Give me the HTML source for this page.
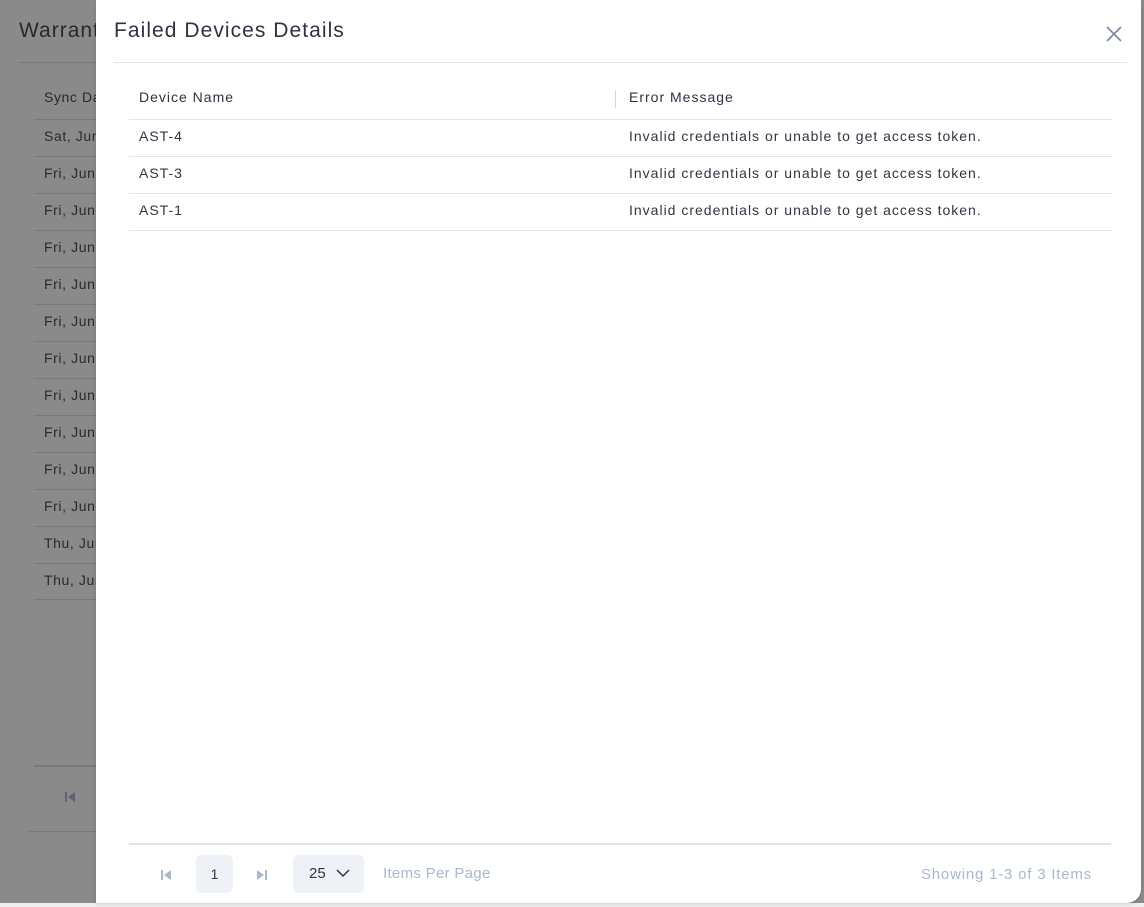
<!DOCTYPE html>
<html><head><style>
*{margin:0;padding:0;box-sizing:border-box}
body{width:1144px;height:907px;position:relative;overflow:hidden;font-family:"Liberation Sans",sans-serif;background:#efefef}
.bg{position:absolute;left:0;top:0;width:1144px;height:903px;background:#8a8a8a}
.t{position:absolute;white-space:nowrap;letter-spacing:0.6px}
.bl{position:absolute;height:1px;background:#7a7a7a}
.modal{position:absolute;left:96px;top:0;width:1045px;height:903px;background:#fff;border-radius:0 0 14px 0;box-shadow:0 1px 3px rgba(0,0,0,.15)}
.ml{position:absolute;height:1px;background:#e2e7ee}
.m{position:absolute;white-space:nowrap;font-size:14px;color:#2f3642;letter-spacing:1px}
</style></head><body>
<div class="bg">
<div class="t" style="left:19px;top:19px;font-size:21px;color:#262a30;letter-spacing:1px">Warranty</div>
<div class="bl" style="left:18px;top:62px;width:90px"></div>
<div class="t" style="left:44px;top:89px;font-size:14px;color:#262a30">Sync Date</div>
<div class="bl" style="left:34px;top:119px;width:70px"></div>
<div class="t" style="left:44px;top:128px;font-size:14px;color:#2a2a2a">Sat, Jun</div><div class="bl" style="left:34px;top:156px;width:70px"></div>
<div class="t" style="left:44px;top:165px;font-size:14px;color:#2a2a2a">Fri, Jun</div><div class="bl" style="left:34px;top:193px;width:70px"></div>
<div class="t" style="left:44px;top:202px;font-size:14px;color:#2a2a2a">Fri, Jun</div><div class="bl" style="left:34px;top:230px;width:70px"></div>
<div class="t" style="left:44px;top:239px;font-size:14px;color:#2a2a2a">Fri, Jun</div><div class="bl" style="left:34px;top:267px;width:70px"></div>
<div class="t" style="left:44px;top:276px;font-size:14px;color:#2a2a2a">Fri, Jun</div><div class="bl" style="left:34px;top:304px;width:70px"></div>
<div class="t" style="left:44px;top:313px;font-size:14px;color:#2a2a2a">Fri, Jun</div><div class="bl" style="left:34px;top:341px;width:70px"></div>
<div class="t" style="left:44px;top:350px;font-size:14px;color:#2a2a2a">Fri, Jun</div><div class="bl" style="left:34px;top:378px;width:70px"></div>
<div class="t" style="left:44px;top:387px;font-size:14px;color:#2a2a2a">Fri, Jun</div><div class="bl" style="left:34px;top:415px;width:70px"></div>
<div class="t" style="left:44px;top:424px;font-size:14px;color:#2a2a2a">Fri, Jun</div><div class="bl" style="left:34px;top:452px;width:70px"></div>
<div class="t" style="left:44px;top:461px;font-size:14px;color:#2a2a2a">Fri, Jun</div><div class="bl" style="left:34px;top:489px;width:70px"></div>
<div class="t" style="left:44px;top:498px;font-size:14px;color:#2a2a2a">Fri, Jun</div><div class="bl" style="left:34px;top:526px;width:70px"></div>
<div class="t" style="left:44px;top:535px;font-size:14px;color:#2a2a2a">Thu, Jun</div><div class="bl" style="left:34px;top:563px;width:70px"></div>
<div class="t" style="left:44px;top:572px;font-size:14px;color:#2a2a2a">Thu, Jun</div><div class="bl" style="left:34px;top:599px;width:70px"></div>
<div class="bl" style="left:34px;top:765px;width:70px;height:2px"></div>
<svg style="position:absolute;left:64px;top:791px" width="12" height="12"><rect x="1" y="1" width="2" height="10" fill="#5c6470"/><path d="M11 1 L4 6 L11 11Z" fill="#5c6470"/></svg>
<div class="bl" style="left:29px;top:831px;width:70px"></div>
</div>
<div class="modal">
<div class="m" style="left:18px;top:19px;font-size:21px;color:#2d3440;letter-spacing:1.05px">Failed Devices Details</div>
<svg style="position:absolute;left:1010px;top:26px" width="16" height="16"><path d="M1 1L15 15M15 1L1 15" stroke="#7a8899" stroke-width="1.6"/></svg>
<div class="ml" style="left:18px;top:62px;width:1013px"></div>
<div class="m" style="left:43px;top:89px;font-weight:500;color:#2b3340">Device Name</div>
<div style="position:absolute;left:519px;top:90px;width:1px;height:18px;background:#cfd6df"></div>
<div class="m" style="left:533px;top:89px;font-weight:500;color:#2b3340">Error Message</div>
<div class="ml" style="left:33px;top:119px;width:983px"></div>
<div class="m" style="left:43px;top:128px">AST-4</div><div class="m" style="left:533px;top:128px">Invalid credentials or unable to get access token.</div>
<div class="ml" style="left:33px;top:156px;width:983px"></div>
<div class="m" style="left:43px;top:165px">AST-3</div><div class="m" style="left:533px;top:165px">Invalid credentials or unable to get access token.</div>
<div class="ml" style="left:33px;top:193px;width:983px"></div>
<div class="m" style="left:43px;top:202px">AST-1</div><div class="m" style="left:533px;top:202px">Invalid credentials or unable to get access token.</div>
<div class="ml" style="left:33px;top:230px;width:983px"></div>
<div class="ml" style="left:33px;top:843px;width:982px;height:2px;background:#dde3ec"></div>
<svg style="position:absolute;left:64px;top:869px" width="12" height="12"><rect x="1" y="1" width="2" height="10" fill="#a9b8cc"/><path d="M11 1 L4 6 L11 11Z" fill="#a9b8cc"/></svg>
<div style="position:absolute;left:100px;top:855px;width:37px;height:38px;background:#eef2f7;border-radius:6px;font-size:14px;color:#2f3642;text-align:center;line-height:38px">1</div>
<svg style="position:absolute;left:160px;top:869px" width="12" height="12"><path d="M1 1 L8 6 L1 11Z" fill="#a9b8cc"/><rect x="9" y="1" width="2" height="10" fill="#a9b8cc"/></svg>
<div style="position:absolute;left:197px;top:855px;width:71px;height:38px;background:#eef2f7;border-radius:6px"></div>
<div class="m" style="left:213px;top:865px;font-size:15px;letter-spacing:0">25</div>
<svg style="position:absolute;left:240px;top:868px" width="14" height="10"><path d="M1 2L7 8L13 2" stroke="#2f3642" stroke-width="1.5" fill="none"/></svg>
<div class="m" style="left:287px;top:865px;font-size:15px;color:#a9b8cc;letter-spacing:0.3px">Items Per Page</div>
<div class="m" style="right:49px;top:866px;font-size:15px;color:#a9b8cc;letter-spacing:0.8px">Showing 1-3 of 3 Items</div>
</div>
</body></html>
